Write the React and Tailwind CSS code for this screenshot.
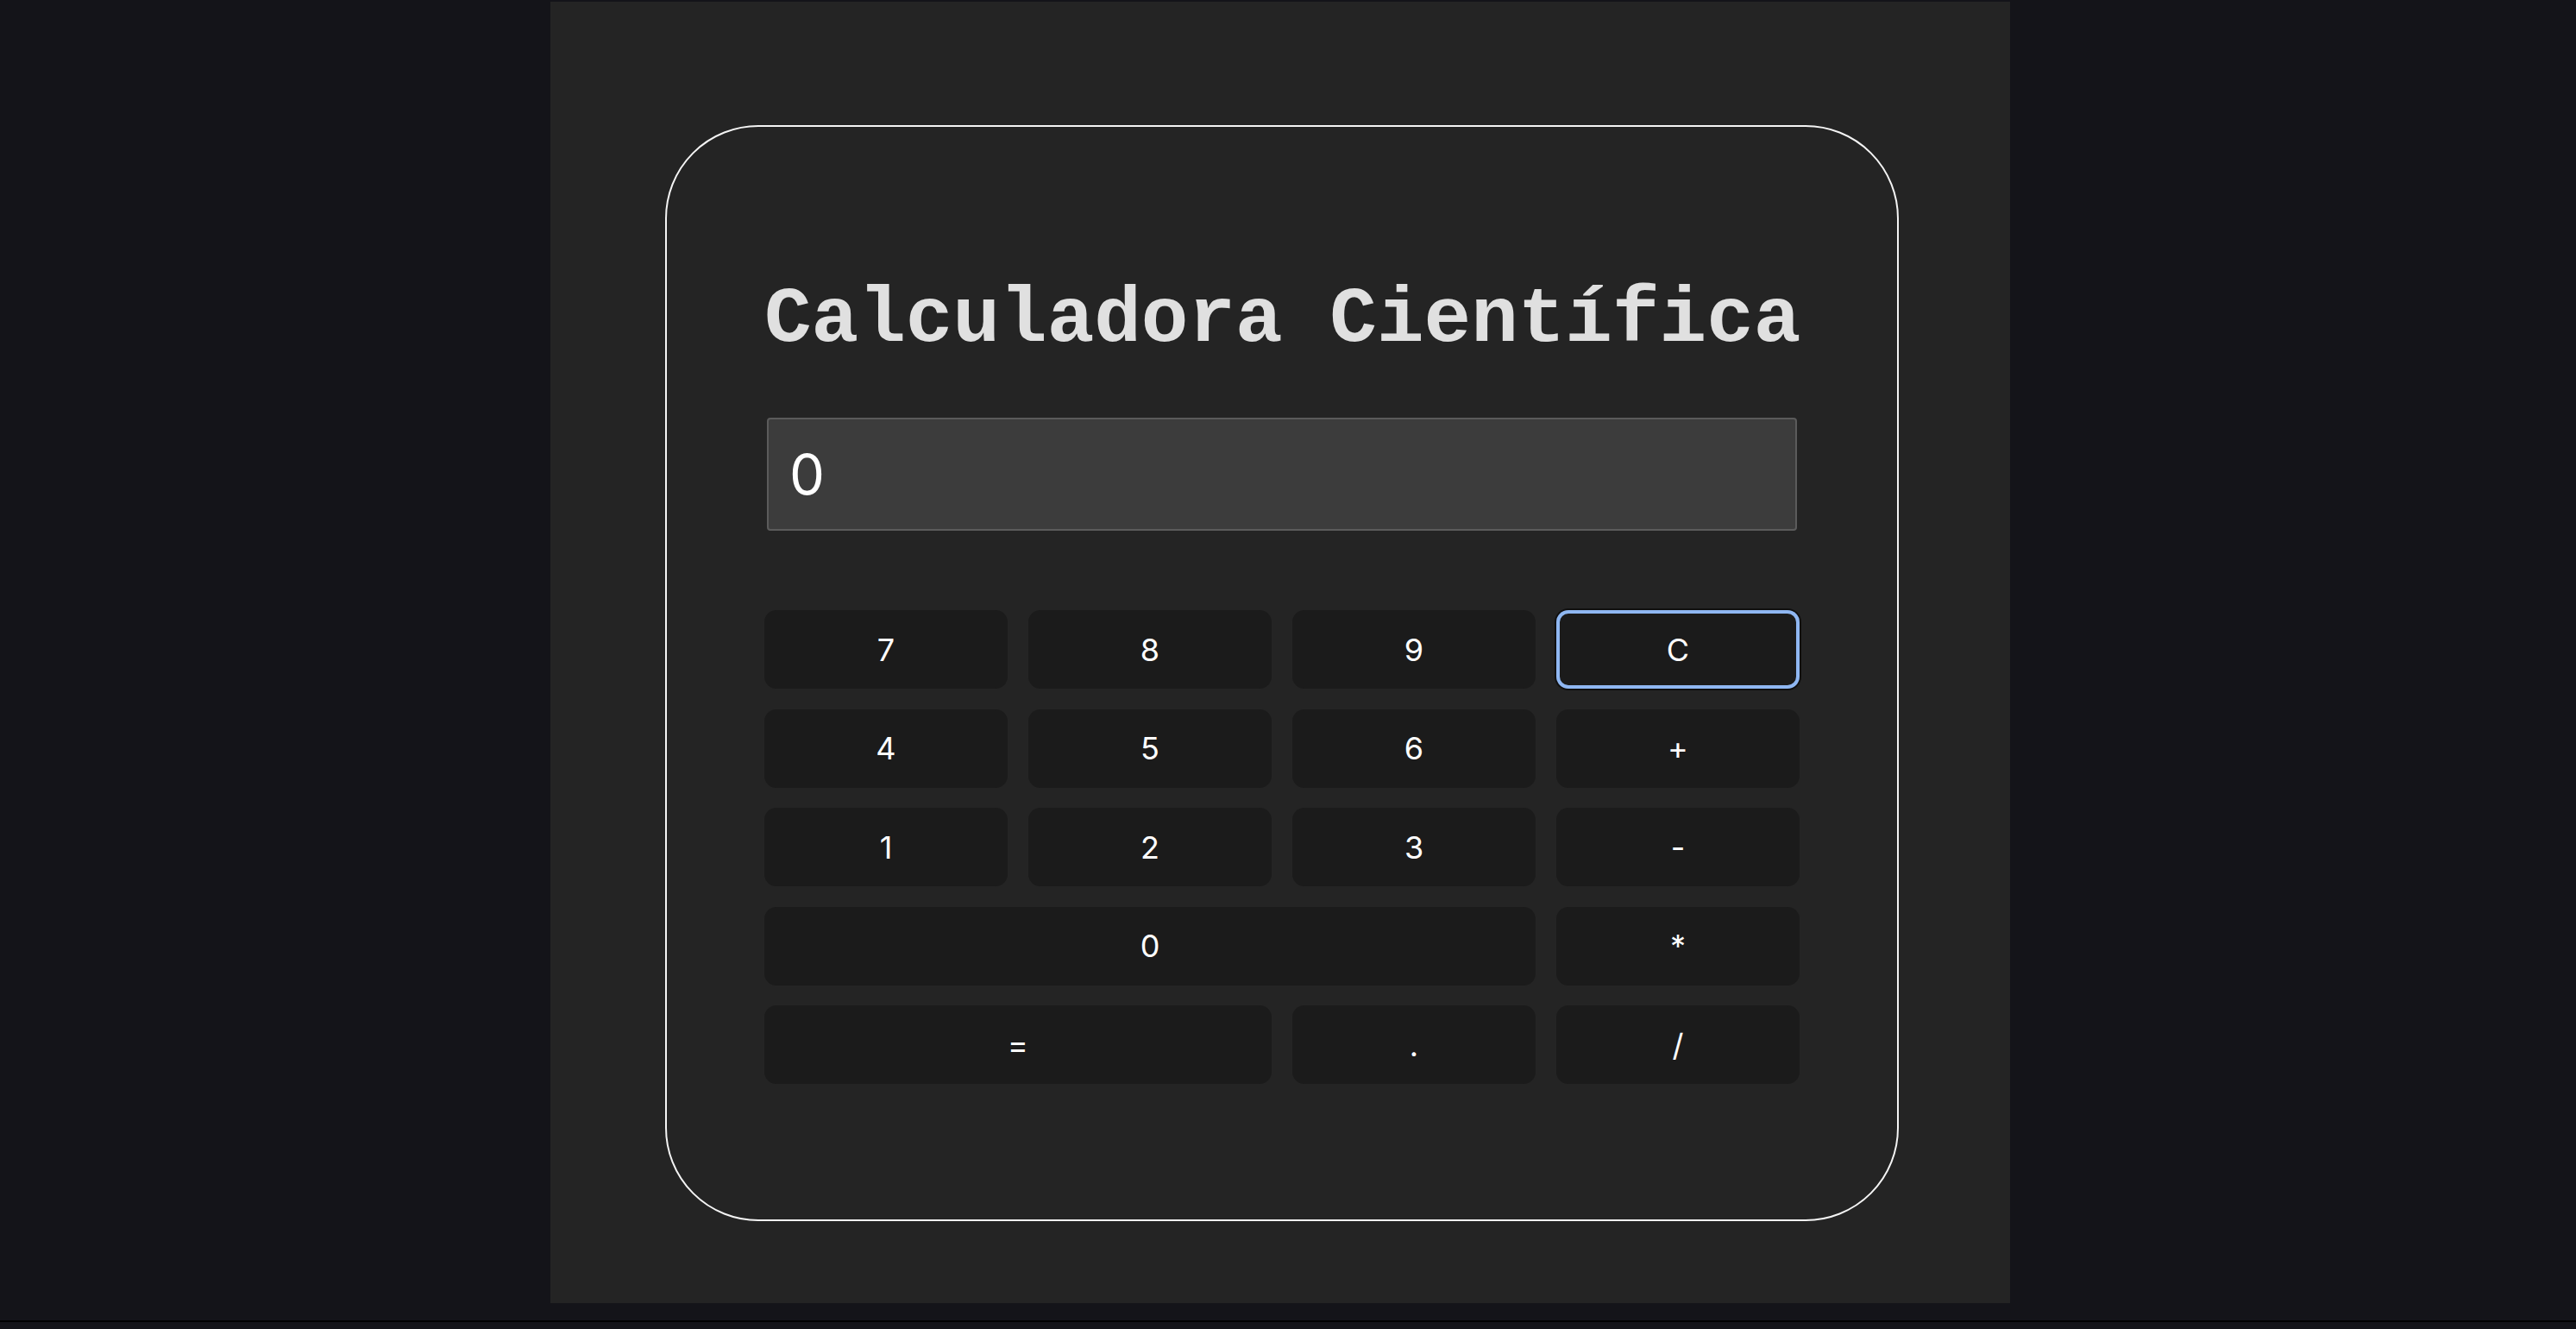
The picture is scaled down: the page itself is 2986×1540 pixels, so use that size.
import React from 'react';

// ─── Teclas de la calculadora ───────────────────────────────────────────────
const KEYS = [
    { label: '7' }, { label: '8' }, { label: '9' }, { label: 'C', focused: true },
    { label: '4' }, { label: '5' }, { label: '6' }, { label: '+' },
    { label: '1' }, { label: '2' }, { label: '3' }, { label: '-' },
    { label: '0', span: 'col-span-3' }, { label: '*' },
    { label: '=', span: 'col-span-2' }, { label: '.' }, { label: '/' },
];

const Key = ({ label, span = '', focused = false }) => (
    <button
        type="button"
        className={`${span} h-[91px] rounded-[14px] bg-[#1b1b1b] text-white text-[36px] font-normal leading-none flex items-center justify-center ${
            focused ? 'shadow-[inset_0_0_0_4px_#8fb7f2,0_0_0_2px_#101010]' : ''
        }`}
        style={{ fontFamily: 'Inter, "Liberation Sans", sans-serif' }}
    >
        {label}
    </button>
);

export default function App() {
    return (
        <div className="w-full h-[1540px] bg-[#141419] overflow-hidden flex flex-col">
            {/* Panel gris */}
            <div className="mt-[2px] ml-[638px] w-[1692px] h-[1508px] bg-[#242424] pt-[143px] pl-[133px]">
                {/* Tarjeta */}
                <div className="w-[1430px] h-[1270px] border-2 border-[#f4f4f4] rounded-[108px] px-[113px] pt-[178px]">
                    <h1
                        className="text-[91px] leading-none font-bold text-[#e0e0e0] whitespace-nowrap"
                        style={{ fontFamily: '"Liberation Mono", "Courier New", monospace' }}
                    >
                        Calculadora Científica
                    </h1>

                    {/* Pantalla */}
                    <div
                        className="mt-[68px] mx-[3px] h-[131px] bg-[#3c3c3c] border-2 border-[#5b5b5b] rounded-[4px] flex items-center pl-[24px] text-white text-[65px] font-normal"
                        style={{ fontFamily: 'Inter, "Liberation Sans", sans-serif' }}
                    >
                        0
                    </div>

                    {/* Botones */}
                    <div className="mt-[92px] grid grid-cols-4 gap-x-[24px] gap-y-[23.5px]">
                        {KEYS.map((k) => (
                            <Key key={k.label} {...k} />
                        ))}
                    </div>
                </div>
            </div>
            <div className="mt-[20px] h-[2px] w-full bg-black" />
        </div>
    );
}
